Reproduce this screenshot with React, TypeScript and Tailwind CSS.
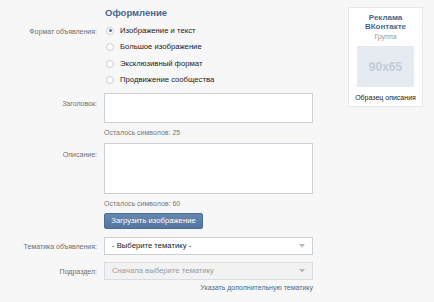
import React, { useState } from "react";

const formats = [
  "Изображение и текст",
  "Большое изображение",
  "Эксклюзивный формат",
  "Продвижение сообщества",
];

const Label = ({ children }: { children: React.ReactNode }) => (
  <div className="w-[97px] shrink-0 text-right text-[7px] leading-[9px] text-[#6f6f6f]">{children}</div>
);

const Radio = ({ checked }: { checked: boolean }) => (
  <span className="flex h-[8px] w-[8px] items-center justify-center rounded-full border border-[#c9ced4] bg-white">
    {checked && <span className="h-[3px] w-[3px] rounded-full bg-[#5a7594]" />}
  </span>
);

const Arrow = () => (
  <svg width="6" height="4" viewBox="0 0 6 4" className="ml-auto">
    <path d="M0 0h6L3 3.5z" fill="#b0b8c2" />
  </svg>
);

export default function App() {
  const [format, setFormat] = useState(0);

  return (
    <div
      className="flex h-[302px] w-[434px] bg-[#f7f7f7] text-[#222]"
      style={{ fontFamily: '"Liberation Sans", Arial, sans-serif' }}
    >
      <div className="w-[340px] pt-[7px]">
        <div className="pl-[105px] text-[9.5px] font-bold leading-[12px] text-[#45688e]">Оформление</div>

        <div className="mt-[6px] flex">
          <div className="pt-[2px]">
            <Label>Формат объявления:</Label>
          </div>
          <div className="ml-[9px] flex flex-col gap-[5px]">
            {formats.map((f, i) => (
              <button
                key={f}
                onClick={() => setFormat(i)}
                className="flex h-[11.5px] items-center gap-[6px] text-left text-[7.7px] text-[#222]"
              >
                <Radio checked={format === i} />
                {f}
              </button>
            ))}
          </div>
        </div>

        <div className="mt-[7px] flex">
          <div className="pt-[6px]">
            <Label>Заголовок:</Label>
          </div>
          <div className="ml-[7px]">
            <div className="h-[30px] w-[209px] border border-[#c9d0d8] bg-white" />
            <div className="mt-[5px] text-[7px] leading-[9px] text-[#777]">Осталось символов: 25</div>
          </div>
        </div>

        <div className="mt-[6px] flex">
          <div className="pt-[7px]">
            <Label>Описание:</Label>
          </div>
          <div className="ml-[7px]">
            <div className="h-[51px] w-[209px] border border-[#c9d0d8] bg-white" />
            <div className="mt-[5px] text-[7px] leading-[9px] text-[#777]">Осталось символов: 60</div>
            <button className="mt-[5px] block h-[16px] w-[99px] rounded-[2px] border border-[#4a6d95] bg-gradient-to-b from-[#6687ad] to-[#5375a0] text-[7.7px] text-white">
              Загрузить изображение
            </button>
          </div>
        </div>

        <div className="mt-[8px] flex items-center">
          <Label>Тематика объявления:</Label>
          <div className="ml-[7px] flex h-[18px] w-[209px] items-center border border-[#c9d0d8] bg-white px-[7px] text-[7.7px] text-[#222]">
            - Выберите тематику -
            <Arrow />
          </div>
        </div>

        <div className="mt-[7px] flex items-center">
          <Label>Подраздел:</Label>
          <div className="ml-[7px] flex h-[18px] w-[209px] items-center border border-[#d8dde3] bg-[#f2f2f2] px-[7px] text-[7.7px] text-[#999]">
            Сначала выберите тематику
            <Arrow />
          </div>
        </div>

        <div className="mt-[3px] w-[313px] text-right text-[7px] text-[#45688e]">
          Указать дополнительную тематику
        </div>
      </div>

      <div className="ml-[8px] mt-[7px] flex h-[100px] w-[75px] flex-col items-center border border-[#e4e7eb] bg-white pt-[5px]">
        <div className="text-center text-[8px] font-bold leading-[9px] text-[#45688e]">
          Реклама
          <br />
          ВКонтакте
        </div>
        <div className="mt-[1px] text-[7px] leading-[9px] text-[#999]">Группа</div>
        <div className="mt-[5px] flex h-[41px] w-[57px] items-center justify-center bg-[#e6ebf1] text-[12px] font-bold text-[#c3ccd7]">
          90x65
        </div>
        <div className="mt-[6px] text-[7px] text-[#222]">Образец описания</div>
      </div>
    </div>
  );
}
